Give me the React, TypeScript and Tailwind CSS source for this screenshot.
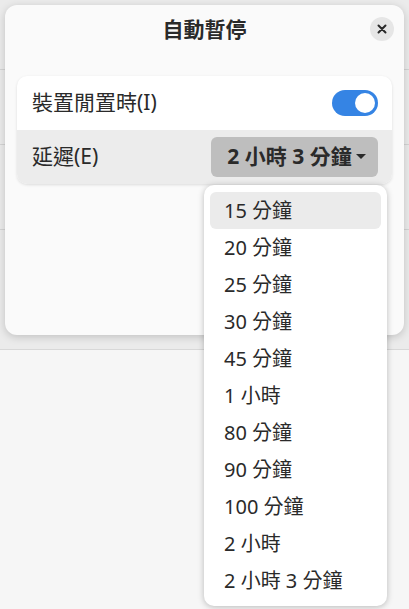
import React from "react";

const options = [
  "15 分鐘",
  "20 分鐘",
  "25 分鐘",
  "30 分鐘",
  "45 分鐘",
  "1 小時",
  "80 分鐘",
  "90 分鐘",
  "100 分鐘",
  "2 小時",
  "2 小時 3 分鐘",
];

export default function App() {
  return (
    <div
      className="relative h-[609px] w-[409px] overflow-hidden bg-[#f6f6f6] text-[#2a2a2a]"
      style={{ fontFamily: '"Noto Sans", "Noto Sans CJK TC", sans-serif' }}
    >
      {/* window behind the dialog */}
      <div className="flex h-[350px] flex-col border-b border-[#d8d8d8] bg-[#ebebeb]">
        <div className="h-[70px] border-b border-[#d4d4d4]" />
        <div className="h-[75px] border-b border-[#d4d4d4]" />
        <div className="h-[85px] border-b border-[#d4d4d4]" />
        <div className="flex-1" />
      </div>

      {/* dialog */}
      <div className="absolute left-[5px] top-[5px] flex h-[330px] w-[399px] flex-col rounded-[12px] bg-[#fafafa] shadow-[0_2px_8px_rgba(0,0,0,0.18)]">
        <div className="relative flex h-[50px] items-center justify-center">
          <span className="text-[21px] font-bold">自動暫停</span>
          <button className="absolute right-[10px] top-[12px] flex h-[24px] w-[24px] items-center justify-center rounded-full bg-[#e6e6e6]">
            <svg width="10" height="10" viewBox="0 0 10 10">
              <path d="M1.5 1.5l7 7M8.5 1.5l-7 7" stroke="#2a2a2a" strokeWidth="2" strokeLinecap="round" />
            </svg>
          </button>
        </div>

        <div className="mx-[12px] mt-[21px] overflow-hidden rounded-[10px] bg-white shadow-[0_1px_3px_rgba(0,0,0,0.12)]">
          <div className="flex h-[54px] items-center justify-between pl-[15px] pr-[14px]">
            <span className="text-[21px]">裝置閒置時(I)</span>
            <div className="flex h-[26px] w-[46px] items-center justify-end rounded-full bg-[#3584e4] pr-[3px]">
              <div className="h-[20px] w-[20px] rounded-full bg-white" />
            </div>
          </div>
          <div className="flex h-[54px] items-center justify-between bg-[#ececec] pl-[15px] pr-[14px]">
            <span className="text-[21px]">延遲(E)</span>
            <button className="flex h-[40px] w-[167px] items-center justify-center gap-[4px] rounded-[6px] bg-[#bebebe] pl-[4px]">
              <span className="text-[21px] font-bold">2 小時 3 分鐘</span>
              <svg width="10" height="6" viewBox="0 0 10 6">
                <path d="M0 0h10L5 5z" fill="#2a2a2a" />
              </svg>
            </button>
          </div>
        </div>
      </div>

      {/* popover menu */}
      <div className="absolute left-[204px] top-[185px] flex w-[183px] flex-col rounded-[10px] bg-white px-[6px] py-[7px] shadow-[0_1px_6px_rgba(0,0,0,0.25)]">
        {options.map((o, i) => (
          <div
            key={o}
            className={
              "flex h-[37px] items-center rounded-[6px] px-[14px] text-[20px] " +
              (i === 0 ? "bg-[#ebebeb]" : "")
            }
          >
            {o}
          </div>
        ))}
      </div>
    </div>
  );
}
